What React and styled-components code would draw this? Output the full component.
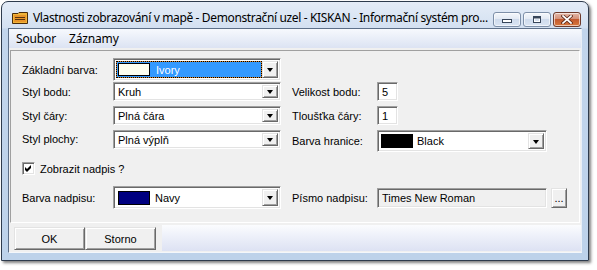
import React from 'react';
import styled, { createGlobalStyle, css } from 'styled-components';

const Global = createGlobalStyle`
  html, body { margin: 0; padding: 0; background: #fff; }
  body { width: 597px; height: 270px; overflow: hidden; }
  * { box-sizing: border-box; }
`;

const uiFont = `"Liberation Sans", Arial, sans-serif`;
const chromeFont = `"Noto Sans", "Open Sans", sans-serif`;

const sunken = css`
  border: 1px solid;
  border-color: #a0a0a0 #ffffff #ffffff #a0a0a0;
  box-shadow: inset 1px 1px 0 #696969, inset -1px -1px 0 #e3e3e3;
`;

const raised = css`
  background: #f0f0f0;
  border: 1px solid;
  border-color: #e3e3e3 #696969 #696969 #e3e3e3;
  box-shadow: inset 1px 1px 0 #ffffff, inset -1px -1px 0 #a0a0a0;
`;

const Window = styled.div`
  margin: 1px 0 0 1px;
  width: 588px;
  height: 260px;
  border: 1px solid #2e3b4d;
  border-radius: 7px 7px 0 0;
  background: linear-gradient(#e4ecf7 0, #d3e0f1 26px, #c2d5ec 27px, #bdd2ea 100%);
  box-shadow: 2px 2px 3px rgba(0, 0, 0, 0.5);
  padding: 0 6px 7px 6px;
  display: flex;
  flex-direction: column;
`;

const TitleBar = styled.div`
  height: 26px;
  display: flex;
  align-items: flex-end;
  padding: 0 1px 0 4px;
`;

const TitleIcon = styled.svg`
  width: 16px;
  height: 12px;
  margin: 0 5px 4px 0;
  flex: none;
`;

const TitleText = styled.div`
  flex: 1;
  min-width: 0;
  font-family: ${chromeFont};
  font-size: 12px;
  letter-spacing: -0.36px;
  color: #000;
  white-space: nowrap;
  line-height: 16px;
  padding-bottom: 2px;
`;

const CaptionButtons = styled.div`
  display: flex;
  gap: 2px;
  padding-bottom: 1px;
  flex: none;
`;

const CaptionButton = styled.div`
  width: 28px;
  height: 15px;
  border: 1px solid ${p => (p.$close ? '#6e3a2c' : '#7d8fa8')};
  border-radius: 3px;
  display: flex;
  align-items: center;
  justify-content: center;
  box-shadow: inset 0 0 0 1px rgba(255, 255, 255, 0.6);
  background: ${p =>
    p.$close
      ? 'linear-gradient(#e4b8a8, #d49078 45%, #c2592f 50%, #d9783c 100%)'
      : 'linear-gradient(#f4f7fb, #e3eaf4 45%, #cfdbec 50%, #dae5f3 100%)'};
`;

const Client = styled.div`
  flex: 1;
  border: 1px solid;
  border-color: #5d6f88 #e9eff7 #f4f7fb #5d6f88;
  background: #f0f0f0;
  display: flex;
  flex-direction: column;
`;

const MenuBar = styled.div`
  height: 19px;
  display: flex;
  align-items: center;
  padding-left: 2px;
  background: linear-gradient(#f7f9fd, #e9eef8 50%, #dce3f3 100%);
`;

const MenuItem = styled.div`
  font-family: ${chromeFont};
  font-size: 12px;
  letter-spacing: -0.15px;
  padding: 0 5px 1px 5px;
  margin-right: 3px;
  color: #000;
`;

const Panel = styled.div`
  margin: 2px 1px 0 1px;
  height: 173px;
  border: 1px solid;
  border-color: #a0a0a0 #ffffff #ffffff #a0a0a0;
  padding: 7px 0 0 11px;
  display: flex;
  flex-direction: column;
`;

const Row = styled.div`
  display: flex;
  align-items: ${p => p.$align || 'center'};
  margin-top: ${p => p.$mt || 0}px;
  height: ${p => p.$h}px;
`;

const Label = styled.div`
  width: ${p => p.$w}px;
  font-family: ${uiFont};
  font-size: 11px;
  line-height: ${p => (p.$lh ? `${p.$lh}px` : 'normal')};
  color: #000;
  white-space: nowrap;
  flex: none;
`;

const Combo = styled.div`
  ${sunken};
  width: ${p => p.$w || 168}px;
  height: ${p => p.$h || 19}px;
  margin-right: ${p => p.$mr || 0}px;
  background: #fff;
  padding: 2px;
  display: flex;
  flex: none;
`;

const ComboValue = styled.div`
  flex: 1;
  display: flex;
  align-items: center;
  gap: ${p => (p.$gap != null ? p.$gap : 4)}px;
  padding-left: ${p => (p.$pl != null ? p.$pl : 2)}px;
  font-family: ${uiFont};
  font-size: 11px;
  color: #000;
  white-space: nowrap;
  ${p =>
    p.$selected &&
    css`
      color: #fff;
      border: 1px dotted #000;
      background: linear-gradient(#3399ff, #3399ff) padding-box, #d8852a border-box;
      padding-left: 1px;
    `}
`;

const Swatch = styled.div`
  width: 32px;
  height: ${p => p.$h || 14}px;
  border: 1px solid #000;
  background: ${p => p.$color};
  flex: none;
`;

const DropButton = styled.div`
  ${raised};
  width: 16px;
  flex: none;
  display: flex;
  align-items: center;
  justify-content: center;
`;

const Arrow = styled.div`
  width: 0;
  height: 0;
  border-left: 3.5px solid transparent;
  border-right: 3.5px solid transparent;
  border-top: 4px solid #000;
  margin-top: 1px;
`;

const Edit = styled.div`
  ${sunken};
  width: ${p => p.$w}px;
  height: ${p => p.$h || 19}px;
  background: ${p => (p.$readonly ? '#f0f0f0' : '#fff')};
  padding: 0 0 0 4px;
  display: flex;
  align-items: center;
  font-family: ${uiFont};
  font-size: 11px;
  color: #000;
  white-space: nowrap;
  flex: none;
`;

const SmallButton = styled.div`
  ${raised};
  width: 16px;
  height: 20px;
  margin-left: 4px;
  font-family: ${uiFont};
  font-size: 11px;
  line-height: 8px;
  text-align: center;
  display: flex;
  align-items: flex-end;
  justify-content: center;
  padding-bottom: 5px;
  flex: none;
`;

const CheckRow = styled.label`
  display: flex;
  align-items: center;
  gap: 5px;
  font-family: ${uiFont};
  font-size: 11px;
  color: #000;
`;

const CheckBox = styled.div`
  ${sunken};
  width: 13px;
  height: 13px;
  background: #fff;
  display: flex;
  align-items: center;
  justify-content: center;
`;

const Footer = styled.div`
  flex: 1;
  display: flex;
  align-items: stretch;
  padding: 2px 0 1px 5px;
`;

const FooterButton = styled.div`
  ${raised};
  width: 71px;
  height: 23px;
  display: flex;
  align-items: center;
  justify-content: center;
  font-family: ${uiFont};
  font-size: 11px;
  color: #000;
  align-self: flex-start;
  margin-top: 2px;
`;

const ToolStrip = styled.div`
  flex: 1;
  margin-left: 6px;
  background: linear-gradient(#fbfcfe, #eef1fa 40%, #dde2f3 100%);
`;

function FolderIcon() {
  return (
    <TitleIcon viewBox="0 0 16 12">
      <path d="M0.5 1.5 H6 L7 0.5 H15.5 V11.5 H0.5 Z" fill="#f0b43a" stroke="#4a2c0c" />
      <rect x="2" y="3" width="12" height="7" fill="#e8952a" />
      <rect x="3" y="5" width="10" height="1" fill="#5a3510" />
      <rect x="3" y="7" width="10" height="1" fill="#5a3510" />
    </TitleIcon>
  );
}

function MinGlyph() {
  return (
    <svg width="12" height="9" viewBox="0 0 12 9">
      <rect x="1.5" y="4.5" width="9" height="3" fill="#fff" stroke="#38465a" />
    </svg>
  );
}

function MaxGlyph() {
  return (
    <svg width="12" height="9" viewBox="0 0 12 9">
      <rect x="2.5" y="1.5" width="7" height="6" fill="#fff" stroke="#38465a" />
      <rect x="3" y="2" width="6" height="1.5" fill="#38465a" />
      <rect x="4" y="4" width="4" height="2" fill="#d8e2f0" />
    </svg>
  );
}

function CloseGlyph() {
  return (
    <svg width="12" height="9" viewBox="0 0 12 9">
      <path d="M2 1 L10 8 M10 1 L2 8" stroke="#5c2a1c" strokeWidth="3.4" strokeLinecap="square" />
      <path d="M2 1 L10 8 M10 1 L2 8" stroke="#fff" strokeWidth="1.7" strokeLinecap="square" />
    </svg>
  );
}

function CheckMark() {
  return (
    <svg width="7" height="7" viewBox="0 0 7 7">
      <path d="M0 2 L2 4 L6 0 L6 3 L2 7 L0 5 Z" fill="#000" />
    </svg>
  );
}

function DropCombo({ children, selected, w, h, mr, gap, pl }) {
  return (
    <Combo $w={w} $h={h} $mr={mr}>
      <ComboValue $selected={selected} $gap={gap} $pl={pl}>
        {children}
      </ComboValue>
      <DropButton>
        <Arrow />
      </DropButton>
    </Combo>
  );
}

export default function App() {
  return (
    <>
      <Global />
      <Window>
        <TitleBar>
          <FolderIcon />
          <TitleText>
            Vlastnosti zobrazování v mapě - Demonstrační uzel - KISKAN - Informační systém pro...
          </TitleText>
          <CaptionButtons>
            <CaptionButton>
              <MinGlyph />
            </CaptionButton>
            <CaptionButton>
              <MaxGlyph />
            </CaptionButton>
            <CaptionButton $close>
              <CloseGlyph />
            </CaptionButton>
          </CaptionButtons>
        </TitleBar>
        <Client>
          <MenuBar>
            <MenuItem>Soubor</MenuItem>
            <MenuItem>Záznamy</MenuItem>
          </MenuBar>
          <Panel>
            <Row $h={23}>
              <Label $w={91}>Základní barva:</Label>
              <DropCombo selected w={168} h={23} gap={6}>
                <Swatch $color="#fffff0" $h={13} />
                Ivory
              </DropCombo>
            </Row>
            <Row $h={19} $mt={1}>
              <Label $w={91}>Styl bodu:</Label>
              <DropCombo w={168} mr={11}>Kruh</DropCombo>
              <Label $w={85}>Velikost bodu:</Label>
              <Edit $w={21}>5</Edit>
            </Row>
            <Row $h={19} $mt={5}>
              <Label $w={91}>Styl čáry:</Label>
              <DropCombo w={168} mr={11}>Plná čára</DropCombo>
              <Label $w={85}>Tloušťka čáry:</Label>
              <Edit $w={21}>1</Edit>
            </Row>
            <Row $h={22} $mt={5} $align="flex-start">
              <Label $w={91} $lh={19}>Styl plochy:</Label>
              <DropCombo w={168} mr={11}>Plná výplň</DropCombo>
              <Label $w={85} $lh={22}>Barva hranice:</Label>
              <DropCombo w={170} h={22} gap={4} pl={1}>
                <Swatch $color="#000" $h={14} />
                Black
              </DropCombo>
            </Row>
            <Row $h={15} $mt={9}>
              <CheckRow>
                <CheckBox>
                  <CheckMark />
                </CheckBox>
                Zobrazit nadpis ?
              </CheckRow>
            </Row>
            <Row $h={23} $mt={10}>
              <Label $w={91}>Barva nadpisu:</Label>
              <DropCombo w={168} h={23} mr={11} gap={5} pl={2}>
                <Swatch $color="#000080" $h={14} />
                Navy
              </DropCombo>
              <Label $w={85}>Písmo nadpisu:</Label>
              <Edit $w={170} $h={20} $readonly>
                Times New Roman
              </Edit>
              <SmallButton>...</SmallButton>
            </Row>
          </Panel>
          <Footer>
            <FooterButton>OK</FooterButton>
            <FooterButton>Storno</FooterButton>
            <ToolStrip />
          </Footer>
        </Client>
      </Window>
    </>
  );
}
